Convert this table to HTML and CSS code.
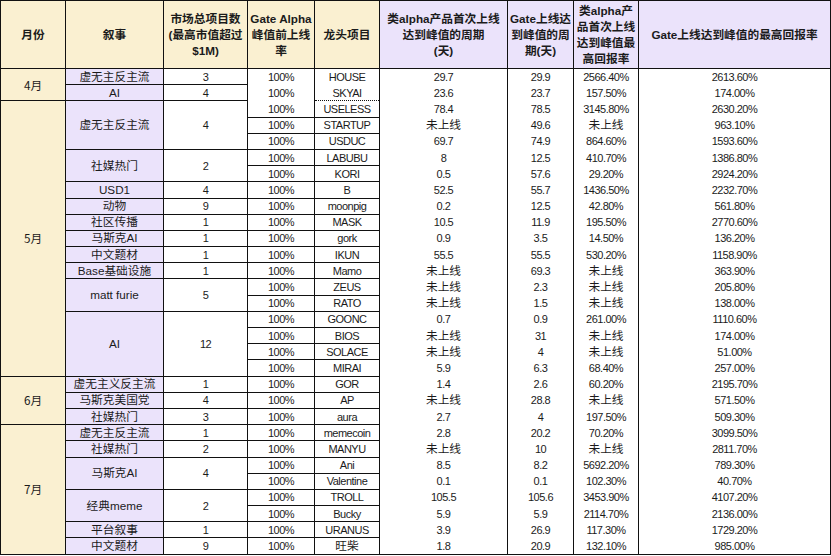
FILE: index.html
```html
<!DOCTYPE html>
<html lang="zh-CN">
<head>
<meta charset="utf-8">
<title>叙事统计表</title>
<link rel="stylesheet" href="styles.css">
</head>
<body>
<table class="sheet">
  <colgroup>
    <col class="w-month"><col class="w-story"><col class="w-count"><col class="w-rate"><col class="w-tick">
    <col class="w-d1"><col class="w-d2"><col class="w-r1"><col class="w-r2">
  </colgroup>
  <thead>
    <tr>
      <th>月份</th>
      <th>叙事</th>
      <th>市场总项目数<br>(最高市值超过<br>$1M)</th>
      <th>Gate Alpha<br>峰值前上线<br>率</th>
      <th>龙头项目</th>
      <th class="v">类alpha产品首次上线<br>达到峰值的周期<br>(天)</th>
      <th class="v">Gate上线达<br>到峰值的周<br>期(天)</th>
      <th class="v">类alpha产<br>品首次上线<br>达到峰值最<br>高回报率</th>
      <th class="v">Gate上线达到峰值的最高回报率</th>
    </tr>
  </thead>
  <tbody>
    <tr class="d apr"><td class="m" rowspan="2">4月</td><td class="n">虚无主反主流</td><td class="c">3</td><td class="p">100%</td><td class="k">HOUSE</td><td>29.7</td><td>29.9</td><td>2566.40%</td><td>2613.60%</td></tr>
    <tr class="d apr apr-last"><td class="n">AI</td><td class="c">4</td><td class="p">100%</td><td class="k">SKYAI</td><td>23.6</td><td>23.7</td><td>157.50%</td><td>174.00%</td></tr>

    <tr class="d may-first"><td class="m" rowspan="17">5月</td><td class="n" rowspan="3">虚无主反主流</td><td class="c" rowspan="3">4</td><td class="p">100%</td><td class="k">USELESS</td><td>78.4</td><td>78.5</td><td>3145.80%</td><td>2630.20%</td></tr>
    <tr class="d"><td class="p">100%</td><td class="k">STARTUP</td><td class="z">未上线</td><td>49.6</td><td class="z">未上线</td><td>963.10%</td></tr>
    <tr class="d"><td class="p">100%</td><td class="k">USDUC</td><td>69.7</td><td>74.9</td><td>864.60%</td><td>1593.60%</td></tr>
    <tr class="d"><td class="n" rowspan="2">社媒热门</td><td class="c" rowspan="2">2</td><td class="p">100%</td><td class="k">LABUBU</td><td>8</td><td>12.5</td><td>410.70%</td><td>1386.80%</td></tr>
    <tr class="d"><td class="p">100%</td><td class="k">KORI</td><td>0.5</td><td>57.6</td><td>29.20%</td><td>2924.20%</td></tr>
    <tr class="d"><td class="n">USD1</td><td class="c">4</td><td class="p">100%</td><td class="k">B</td><td>52.5</td><td>55.7</td><td>1436.50%</td><td>2232.70%</td></tr>
    <tr class="d"><td class="n">动物</td><td class="c">9</td><td class="p">100%</td><td class="k">moonpig</td><td>0.2</td><td>12.5</td><td>42.80%</td><td>561.80%</td></tr>
    <tr class="d"><td class="n">社区传播</td><td class="c">1</td><td class="p">100%</td><td class="k">MASK</td><td>10.5</td><td>11.9</td><td>195.50%</td><td>2770.60%</td></tr>
    <tr class="d"><td class="n">马斯克AI</td><td class="c">1</td><td class="p">100%</td><td class="k">gork</td><td>0.9</td><td>3.5</td><td>14.50%</td><td>136.20%</td></tr>
    <tr class="d"><td class="n">中文题材</td><td class="c">1</td><td class="p">100%</td><td class="k">IKUN</td><td>55.5</td><td>55.5</td><td>530.20%</td><td>1158.90%</td></tr>
    <tr class="d"><td class="n">Base基础设施</td><td class="c">1</td><td class="p">100%</td><td class="k">Mamo</td><td class="z">未上线</td><td>69.3</td><td class="z">未上线</td><td>363.90%</td></tr>
    <tr class="d"><td class="n" rowspan="2">matt furie</td><td class="c" rowspan="2">5</td><td class="p">100%</td><td class="k">ZEUS</td><td class="z">未上线</td><td>2.3</td><td class="z">未上线</td><td>205.80%</td></tr>
    <tr class="d"><td class="p">100%</td><td class="k">RATO</td><td class="z">未上线</td><td>1.5</td><td class="z">未上线</td><td>138.00%</td></tr>
    <tr class="d"><td class="n" rowspan="4">AI</td><td class="c" rowspan="4">12</td><td class="p">100%</td><td class="k">GOONC</td><td>0.7</td><td>0.9</td><td>261.00%</td><td>1110.60%</td></tr>
    <tr class="d"><td class="p">100%</td><td class="k">BIOS</td><td class="z">未上线</td><td>31</td><td class="z">未上线</td><td>174.00%</td></tr>
    <tr class="d"><td class="p">100%</td><td class="k">SOLACE</td><td class="z">未上线</td><td>4</td><td class="z">未上线</td><td>51.00%</td></tr>
    <tr class="d"><td class="p">100%</td><td class="k">MIRAI</td><td>5.9</td><td>6.3</td><td>68.40%</td><td>257.00%</td></tr>

    <tr class="d"><td class="m" rowspan="3">6月</td><td class="n">虚无主义反主流</td><td class="c">1</td><td class="p">100%</td><td class="k">GOR</td><td>1.4</td><td>2.6</td><td>60.20%</td><td>2195.70%</td></tr>
    <tr class="d"><td class="n">马斯克美国党</td><td class="c">4</td><td class="p">100%</td><td class="k">AP</td><td class="z">未上线</td><td>28.8</td><td class="z">未上线</td><td>571.50%</td></tr>
    <tr class="d"><td class="n">社媒热门</td><td class="c">3</td><td class="p">100%</td><td class="k">aura</td><td>2.7</td><td>4</td><td>197.50%</td><td>509.30%</td></tr>

    <tr class="d"><td class="m" rowspan="8">7月</td><td class="n">虚无主反主流</td><td class="c">1</td><td class="p">100%</td><td class="k">memecoin</td><td>2.8</td><td>20.2</td><td>70.20%</td><td>3099.50%</td></tr>
    <tr class="d"><td class="n">社媒热门</td><td class="c">2</td><td class="p">100%</td><td class="k">MANYU</td><td class="z">未上线</td><td>10</td><td class="z">未上线</td><td>2811.70%</td></tr>
    <tr class="d"><td class="n" rowspan="2">马斯克AI</td><td class="c" rowspan="2">4</td><td class="p">100%</td><td class="k">Ani</td><td>8.5</td><td>8.2</td><td>5692.20%</td><td>789.30%</td></tr>
    <tr class="d"><td class="p">100%</td><td class="k">Valentine</td><td>0.1</td><td>0.1</td><td>102.30%</td><td>40.70%</td></tr>
    <tr class="d"><td class="n" rowspan="2">经典meme</td><td class="c" rowspan="2">2</td><td class="p">100%</td><td class="k">TROLL</td><td>105.5</td><td>105.6</td><td>3453.90%</td><td>4107.20%</td></tr>
    <tr class="d"><td class="p">100%</td><td class="k">Bucky</td><td>5.9</td><td>5.9</td><td>2114.70%</td><td>2136.00%</td></tr>
    <tr class="d"><td class="n">平台叙事</td><td class="c">1</td><td class="p">100%</td><td class="k">URANUS</td><td>3.9</td><td>26.9</td><td>117.30%</td><td>1729.20%</td></tr>
    <tr class="d"><td class="n">中文题材</td><td class="c">9</td><td class="p">100%</td><td class="k z">旺柴</td><td>1.8</td><td>20.9</td><td>132.10%</td><td>985.00%</td></tr>
  </tbody>
</table>
</body>
</html>
```

FILE: styles.css
```css
body {
  margin: 0;
  background: #ffffff;
}

.sheet {
  border-collapse: collapse;
  table-layout: fixed;
  width: 830px;
  border: 1px solid #111;
  font-family: "Liberation Sans", "Noto Sans CJK SC", sans-serif;
  font-size: 11px;
  color: #1b1b1b;
}

.w-month { width: 65px; }
.w-story { width: 98px; }
.w-count { width: 84px; }
.w-rate  { width: 67px; }
.w-tick  { width: 65px; }
.w-d1    { width: 128px; }
.w-d2    { width: 66px; }
.w-r1    { width: 65px; }
.w-r2    { width: 192px; }

.sheet th {
  height: 67px;
  padding: 0;
  border: 1px solid #111;
  background: #faf0d1;
  font-family: "Liberation Sans", "Noto Sans CJK SC", sans-serif;
  font-size: 11.7px;
  font-weight: bold;
  line-height: 16px;
  text-align: center;
  vertical-align: middle;
  color: #1b1b1b;
}

.sheet th.v {
  background: #ebe3fb;
}

.sheet tr.d {
  height: 16.2px;
}

.sheet td {
  padding: 0;
  border-left: 1px solid #111;
  border-right: 1px solid #111;
  text-align: center;
  vertical-align: middle;
  line-height: 14px;
  white-space: nowrap;
  overflow: hidden;
  letter-spacing: -0.5px;
}

.sheet td.m {
  background: #faf0d1;
  font-family: "Noto Sans CJK SC", sans-serif;
  font-size: 11.7px;
  letter-spacing: 0;
}

.sheet td.n {
  background: #ebe3fb;
  font-size: 11.7px;
  letter-spacing: 0;
}

.sheet td.z {
  font-size: 11.7px;
  letter-spacing: 0;
}

.sheet td.m,
.sheet td.n,
.sheet td.c,
.sheet td.p,
.sheet td.k {
  border-top: 1px solid #111;
  border-bottom: 1px solid #111;
}

.sheet tr.apr td.p,
.sheet tr.apr td.k {
  border-top: none;
  border-bottom: none;
}

.sheet tr.apr-last td.k {
  border-bottom: 1px dotted #111;
}

.sheet tr.may-first td.p {
  border-top: none;
}

.sheet tr.may-first td.k {
  border-top: 1px dotted #111;
}
```
